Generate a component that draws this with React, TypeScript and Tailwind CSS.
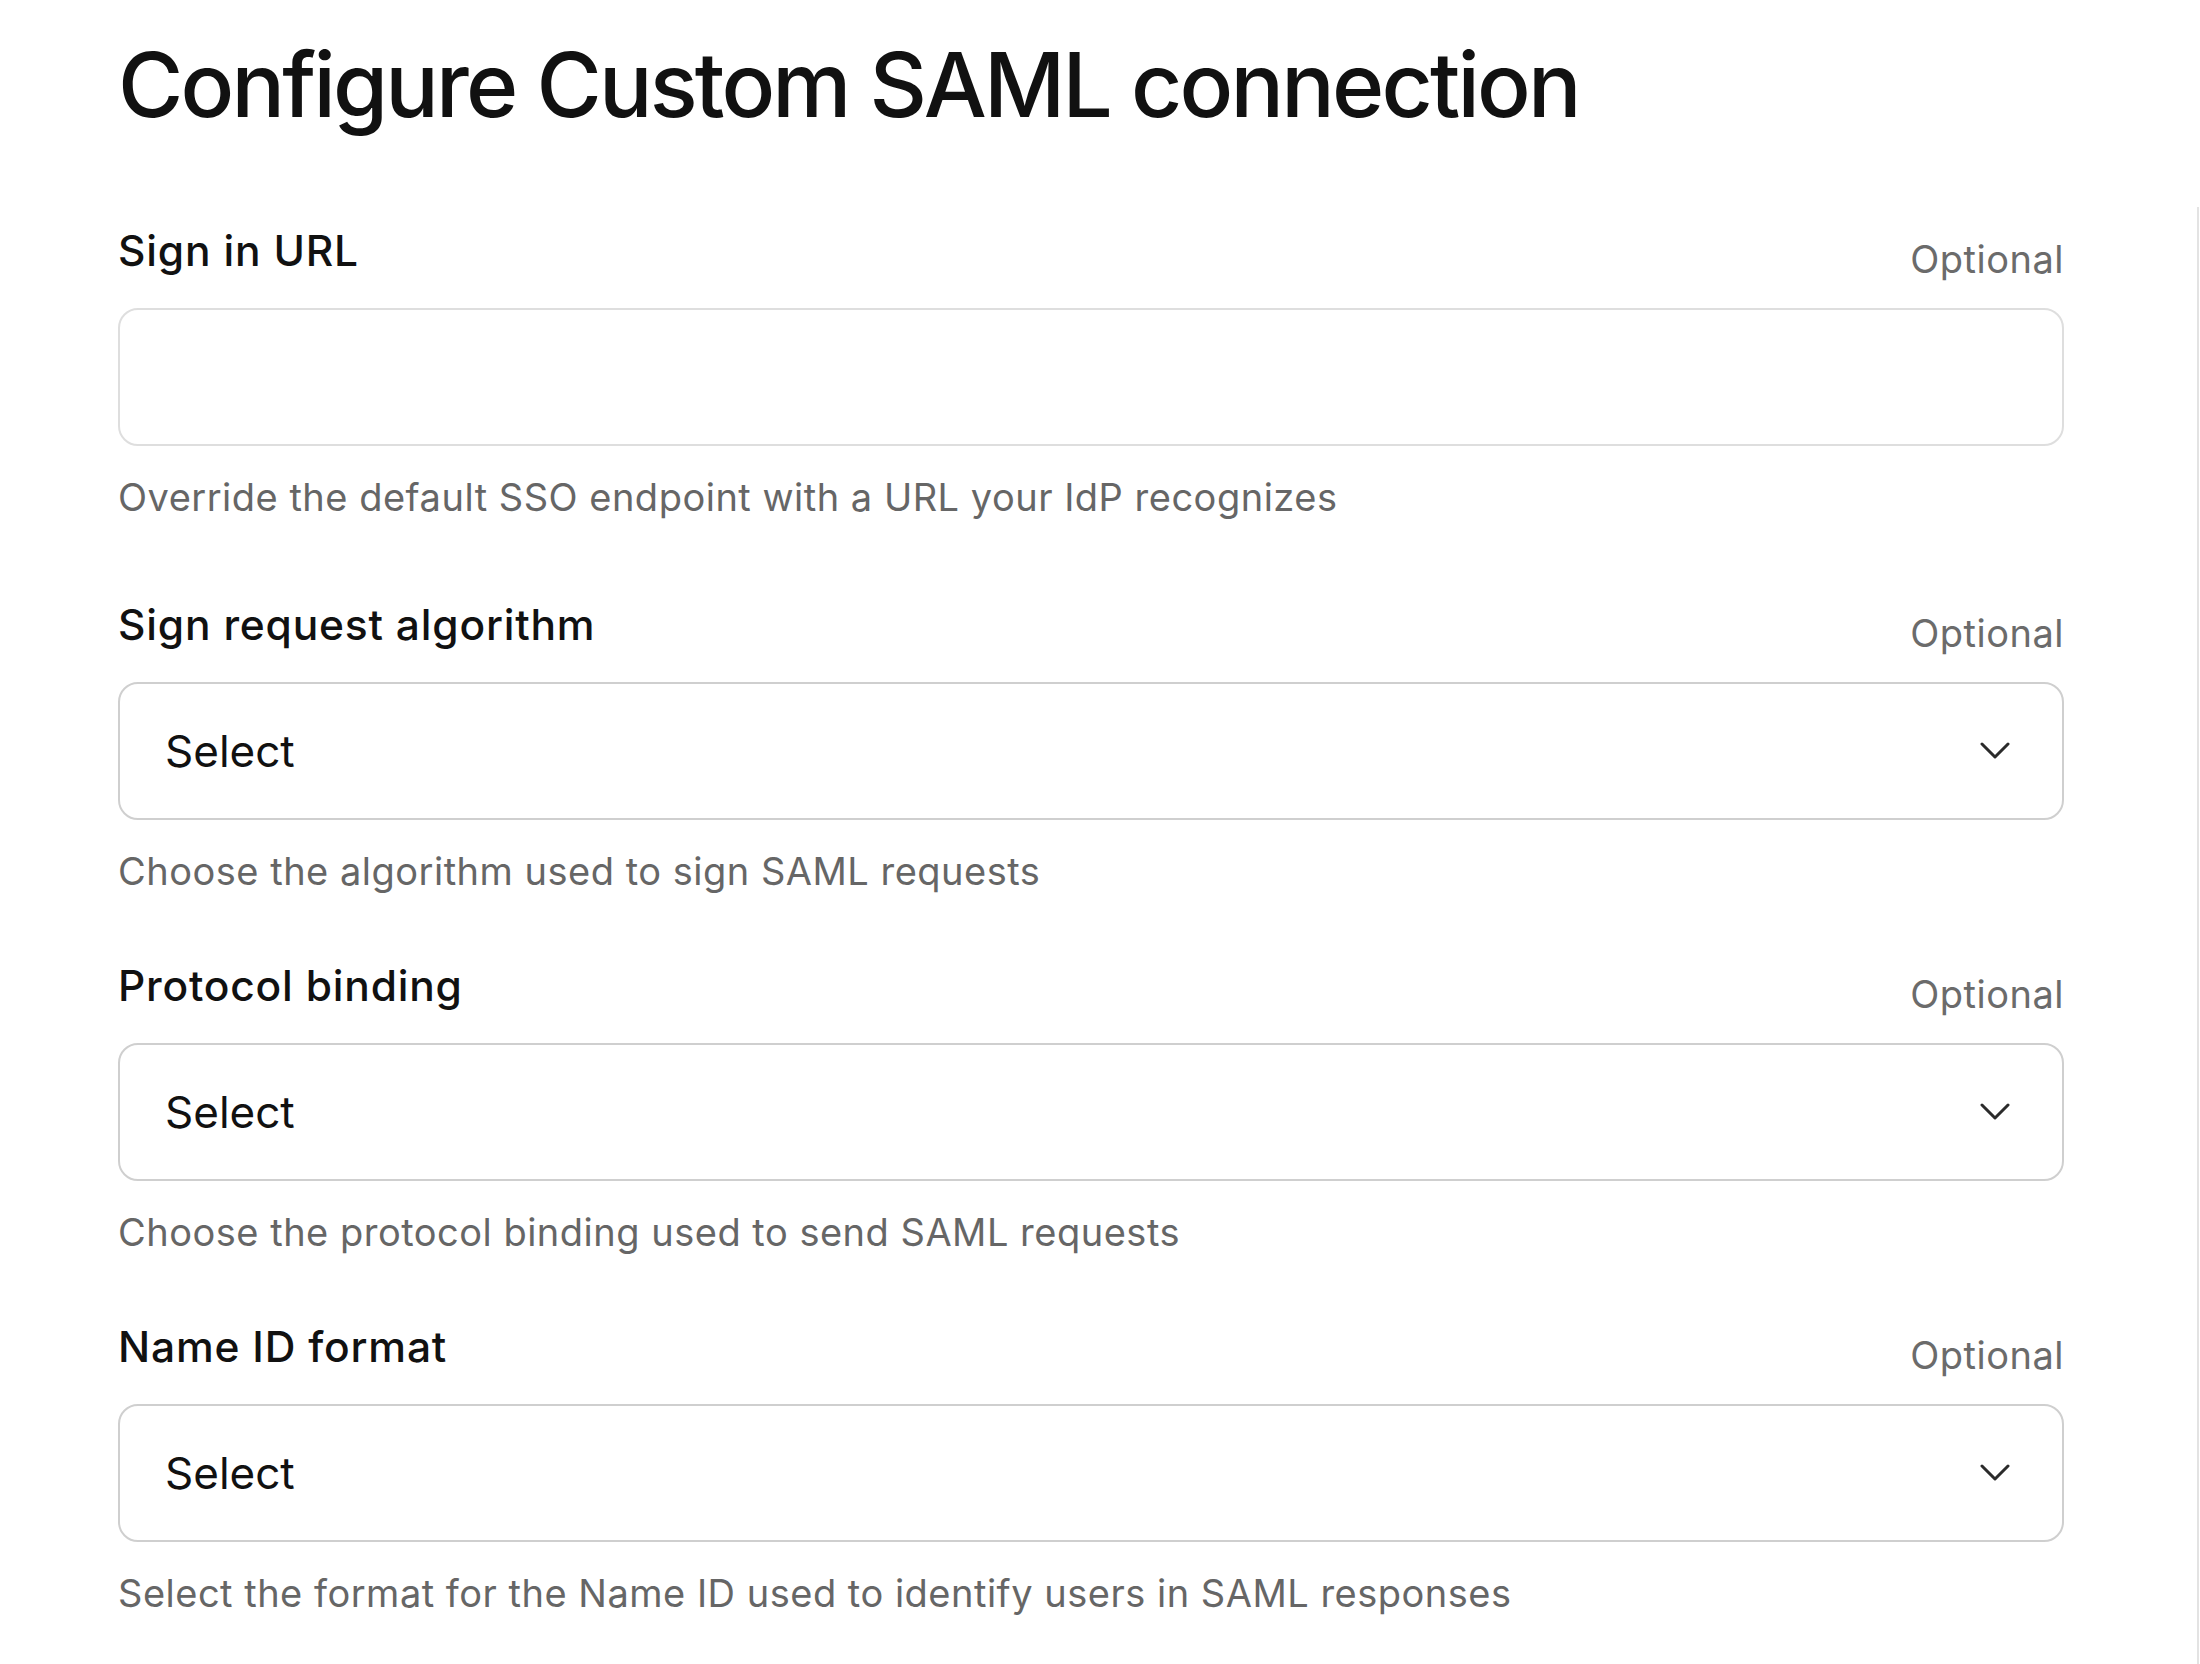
import React from 'react';

type Field = {
    label: string;
    hint: string;
    kind: 'input' | 'select';
};

const fields: Field[] = [
    { label: 'Sign in URL', hint: 'Override the default SSO endpoint with a URL your IdP recognizes', kind: 'input' },
    { label: 'Sign request algorithm', hint: 'Choose the algorithm used to sign SAML requests', kind: 'select' },
    { label: 'Protocol binding', hint: 'Choose the protocol binding used to send SAML requests', kind: 'select' },
    { label: 'Name ID format', hint: 'Select the format for the Name ID used to identify users in SAML responses', kind: 'select' },
];

const Chevron = () => (
    <svg width="30" height="18" viewBox="0 0 30 18" fill="none">
        <polyline points="2,2 15,15 28,2" stroke="#2b2b2b" strokeWidth="3" strokeLinecap="round" strokeLinejoin="round" />
    </svg>
);

const App: React.FC = () => {
    return (
        <div className="flex min-h-screen bg-white font-['Inter',sans-serif] text-[#111111]">
            {/* Formulário */}
            <main className="w-[2197px] shrink-0 pl-[118px] pr-[133px]">
                <h1 className="mt-[31px] text-[89px] leading-[108px] font-medium tracking-[-2.8px]">
                    Configure Custom SAML connection
                </h1>

                <div className="mt-[85px] flex flex-col">
                    {fields.map((field, idx) => (
                        <section key={idx} className={idx === 0 ? 'mb-[74px]' : 'mb-[61px]'}>
                            <div className="flex items-end justify-between">
                                <label className="pb-[8px] text-[42.5px] leading-[54px] font-medium tracking-[0.8px]">{field.label}</label>
                                <span className="text-[38px] leading-[54px] tracking-[0.5px] text-[#6b6b6b]">Optional</span>
                            </div>

                            {field.kind === 'input' ? (
                                <div className="mt-[22px] h-[138px] rounded-[20px] border-2 border-[#dedede] bg-white" />
                            ) : (
                                <div className="mt-[22px] flex h-[138px] items-center justify-between rounded-[20px] border-2 border-[#cfcfcf] bg-white pl-[45px] pr-[52px]">
                                    <span className="text-[44px] leading-[54px]">Select</span>
                                    <Chevron />
                                </div>
                            )}

                            <p className="mt-[24px] text-[38px] leading-[54px] tracking-[0.5px] text-[#666666]">{field.hint}</p>
                        </section>
                    ))}
                </div>
            </main>

            {/* Painel lateral (só a borda aparece) */}
            <aside className="mt-[207px] flex-1 border-l-2 border-[#e3e3e3]" />
        </div>
    );
};

export default App;
